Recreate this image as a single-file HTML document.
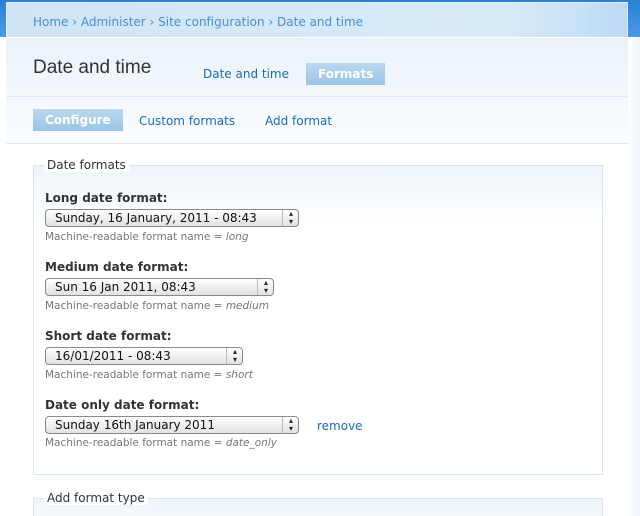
<!DOCTYPE html>
<html><head><style>
*{margin:0;padding:0;box-sizing:border-box}
html{width:640px;height:516px;overflow:hidden}
body{width:640px;height:516px;overflow:hidden;background:#fff;font-family:"DejaVu Sans","Liberation Sans",sans-serif;position:relative}
.top{position:absolute;left:0;top:0;width:640px;height:37px;background:linear-gradient(#2a7fd6,#4a9ae6)}
.rstrip{position:absolute;left:628px;top:37px;width:12px;height:479px;background:linear-gradient(90deg,#fff,#eef5fb)}
.bc{position:absolute;left:6px;top:2px;width:622px;height:35px;background:linear-gradient(90deg,#cfe5f6,#d9ebf8 80%,#bcdaf3);border:1px solid #e4f0fa;border-bottom:none;font-size:12px;color:#4a8fd0;padding:12px 0 0 26px}
.head{position:absolute;left:6px;top:37px;width:622px;height:106px;background:linear-gradient(#e9f2fa,#fbfdff);border-top:1px solid #fff}
h1{position:absolute;left:27px;top:19px;font-weight:normal;font-size:19px;color:#333;font-family:"Liberation Sans",sans-serif}
.tab{position:absolute;font-size:12px;color:#1a6bb8}
.act{background:linear-gradient(#bcd8ee,#98c4e6);color:#fff;font-weight:bold;padding:3px 12px}
.l1{position:absolute;left:0;top:58px;width:622px;border-top:1px solid #dde9f3}
.l2{position:absolute;left:0;top:105px;width:622px;border-top:1px solid #dde9f3}
.fs{position:absolute;left:33px;width:570px;border:1px solid #d6e6f3;background:linear-gradient(#eef5fb,#fff 60px)}
.lg{position:absolute;background:#fff;font-size:12px;color:#333;padding:0 3px;left:10px;top:-8px}
.lab{position:absolute;left:45px;font-size:12px;font-weight:bold;color:#333}
.sel{position:absolute;left:45px;height:18px;border:1px solid #8a8a8a;border-radius:4px;background:linear-gradient(#fff,#f0f0f0 50%,#e2e2e2);font-size:12px;color:#111;padding:1px 0 0 9px}
.sel:after{content:"";position:absolute;right:0;top:0;width:15px;height:16px;border-left:1px solid #bbb}
.sel b{position:absolute;right:5px;top:0;font-size:8px;line-height:8px;font-weight:normal;color:#222}
.d{position:absolute;left:45px;font-size:10.5px;color:#777}
</style></head><body>
<div class="top"></div><div class="rstrip"></div>
<div class="bc">Home › Administer › Site configuration › Date and time</div>
<div class="head">
<h1>Date and time</h1>
<div class="tab" style="left:197px;top:29px">Date and time</div>
<div class="tab act" style="left:300px;top:25px;padding:4px 12px">Formats</div>
<div class="l1"></div>
<div class="tab act" style="left:27px;top:71px;padding:4px 12px">Configure</div>
<div class="tab" style="left:133px;top:76px">Custom formats</div>
<div class="tab" style="left:259px;top:76px">Add format</div>
<div class="l2"></div>
</div>
<div class="fs" style="top:165px;height:310px"><div class="lg">Date formats</div></div>
<div class="lab" style="top:191px">Long date format:</div>
<div class="sel" style="top:209px;width:254px">Sunday, 16 January, 2011 - 08:43<b>▴<br>▾</b></div>
<div class="d" style="top:231px">Machine-readable format name = <i>long</i></div>
<div class="lab" style="top:260px">Medium date format:</div>
<div class="sel" style="top:278px;width:229px">Sun 16 Jan 2011, 08:43<b>▴<br>▾</b></div>
<div class="d" style="top:300px">Machine-readable format name = <i>medium</i></div>
<div class="lab" style="top:329px">Short date format:</div>
<div class="sel" style="top:347px;width:198px">16/01/2011 - 08:43<b>▴<br>▾</b></div>
<div class="d" style="top:369px">Machine-readable format name = <i>short</i></div>
<div class="lab" style="top:398px">Date only date format:</div>
<div class="sel" style="top:416px;width:254px">Sunday 16th January 2011<b>▴<br>▾</b></div>
<div class="tab" style="left:317px;top:419px">remove</div>
<div class="d" style="top:437px">Machine-readable format name = <i>date_only</i></div>
<div class="fs" style="top:498px;height:18px;border-bottom:none"><div class="lg">Add format type</div></div>
</body></html>
